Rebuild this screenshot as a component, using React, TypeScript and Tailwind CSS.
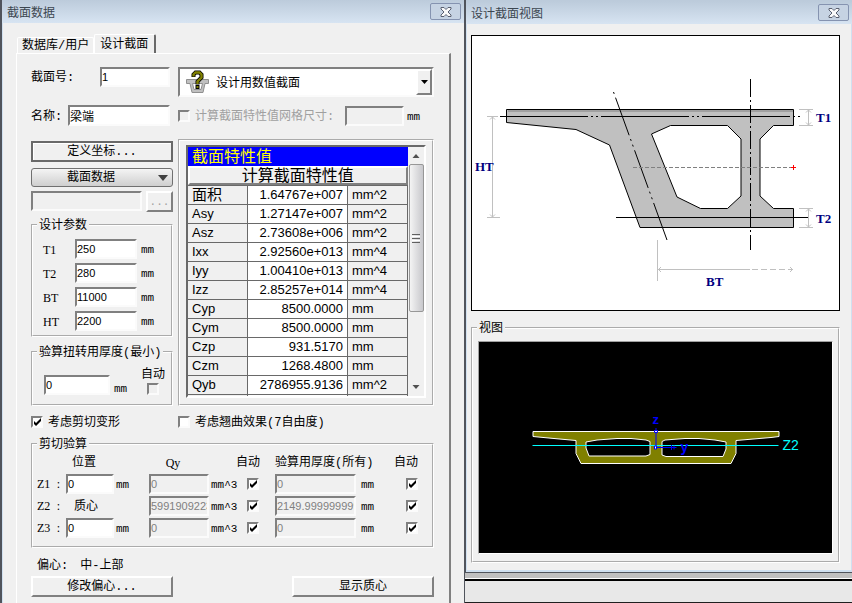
import React, { useState } from 'react';
import { clsx } from 'clsx';

const UI_FONT = "font-['Liberation_Mono','Noto_Sans_CJK_SC',monospace]";
const SUNKEN = 'border-2 border-t-[#808080] border-l-[#808080] border-b-[#fbfbfb] border-r-[#fbfbfb]';
const RAISED = 'border-2 border-t-white border-l-white border-b-[#808080] border-r-[#808080]';

const PROPERTIES = [
  { name: '面积', value: '1.64767e+007', unit: 'mm^2' },
  { name: 'Asy', value: '1.27147e+007', unit: 'mm^2' },
  { name: 'Asz', value: '2.73608e+006', unit: 'mm^2' },
  { name: 'Ixx', value: '2.92560e+013', unit: 'mm^4' },
  { name: 'Iyy', value: '1.00410e+013', unit: 'mm^4' },
  { name: 'Izz', value: '2.85257e+014', unit: 'mm^4' },
  { name: 'Cyp', value: '8500.0000', unit: 'mm' },
  { name: 'Cym', value: '8500.0000', unit: 'mm' },
  { name: 'Czp', value: '931.5170', unit: 'mm' },
  { name: 'Czm', value: '1268.4800', unit: 'mm' },
  { name: 'Qyb', value: '2786955.9136', unit: 'mm^2' },
];

const PARAMS = [
  { id: 'T1', value: '250' },
  { id: 'T2', value: '280' },
  { id: 'BT', value: '11000' },
  { id: 'HT', value: '2200' },
];

const SHEAR_ROWS = [
  { id: 'Z1', position: '0', qy: '0', thickness: '0' },
  { id: 'Z2', position: null, qy: '59919092235', thickness: '2149.9999999999' },
  { id: 'Z3', position: '0', qy: '0', thickness: '0' },
];

function Field({ className, ...props }: React.InputHTMLAttributes<HTMLInputElement>) {
  return (
    <input
      type="text"
      className={clsx(
        SUNKEN,
        "h-5 min-w-0 rounded-none bg-white pb-px font-['Liberation_Sans','Noto_Sans_CJK_SC',sans-serif] leading-4 text-black outline-none",
        'disabled:bg-[#f0f0f0] disabled:text-[#808080]',
        className ?? '',
        !className?.includes('text-xs') && 'text-[11px]'
      )}
      {...props}
    />
  );
}

function CheckBox({ className, ...props }: React.InputHTMLAttributes<HTMLInputElement>) {
  return (
    <span className={clsx('relative block size-3 shrink-0', className)}>
      <input
        type="checkbox"
        className={clsx(SUNKEN, 'peer block size-3 appearance-none bg-white disabled:bg-[#f0f0f0]')}
        {...props}
      />
      <svg viewBox="0 0 12 12" className="pointer-events-none absolute inset-0 hidden size-3 peer-checked:block">
        <path d="M3 5v3l2 2 5-5V2L5 7z" fill="#000" />
      </svg>
    </span>
  );
}

function Unit({ children, className }: { children: React.ReactNode; className?: string }) {
  return (
    <span className={clsx('pt-0.5 text-[11px] leading-3', className)}>{children}</span>
  );
}

function TitleBar({ title }: { title: string }) {
  return (
    <header className="flex h-[23px] items-center justify-between bg-linear-to-b from-[#bccbdb] to-[#d7e4f2] pr-[3px] pl-[5px]">
      <h1 className="font-['Noto_Sans_CJK_SC',sans-serif] text-xs leading-4 text-[#3c4650]">{title}</h1>
      <button
        type="button"
        aria-label="关闭"
        className="flex h-[17px] w-[31px] items-center justify-center rounded-[2px] border border-[#8593b0] bg-[#c6d3e3]"
      >
        <svg viewBox="0 0 12 10" className="h-2.5 w-3">
          <path
            d="M1 .5h3l2 2 2-2h3v1.500L8 5l3 3v1.500H8l-2-2-2 2H1V8l3-3-3-3z"
            fill="#fafafa"
            stroke="#5a6070"
            strokeWidth="1"
          />
        </svg>
      </button>
    </header>
  );
}

function Group({ title, className, children }: { title: string; className?: string; children: React.ReactNode }) {
  return (
    <fieldset className={clsx('min-w-0 border-2 border-white [border-style:groove]', className)}>
      <legend className="ml-1 px-0.5 pt-[3px] text-xs leading-[11px]">{title}</legend>
      {children}
    </fieldset>
  );
}

// trough-shaped girder with a question mark over it
function SectionIcon() {
  return (
    <svg viewBox="0 0 24 24" className="size-6 shrink-0">
      <path d="M.5 9.500h22v4h-3.500l-2 9h-11l-2-9H.5z" fill="#c0c0c0" stroke="#909090" />
      <path d="M6.500 13.500h10l-1.500 6H8z" fill="#fff" stroke="#909090" />
      <path d="M7.500 7V4.500L9.500 2.500h4l2 2v3l-4 4v3" fill="none" stroke="#000" strokeWidth="4" />
      <path d="M7.500 6.500v-2l2-2h4l2 2v3l-4 4v2.500" fill="none" stroke="#808000" strokeWidth="2.400" />
      <path d="M9.500 15h4v4h-4z" fill="#000" />
      <path d="M10.500 16h2v2h-2z" fill="#808000" />
    </svg>
  );
}

function PropertyGrid() {
  return (
    <div className="h-[267px] border-2 border-white px-1.5 pt-1 [border-style:groove]">
      <div className="flex h-[253px] border-2 border-t-[#696969] border-r-white border-b-white border-l-[#696969]">
        <div className="min-w-0 flex-1 overflow-hidden">
          <table className="w-full table-fixed border-collapse font-['Liberation_Sans','Noto_Sans_CJK_SC',sans-serif] text-[13px] leading-4">
            <colgroup>
              <col className="w-[59px]" />
              <col />
              <col className="w-[60px]" />
            </colgroup>
            <thead>
              <tr className="h-[19px]">
                <th colSpan={3} className="bg-[#0000ff] p-0 pl-1 text-left text-base leading-4 font-normal text-[#ffff00]">
                  截面特性值
                </th>
              </tr>
              <tr className="h-[19px]">
                <th colSpan={3} className="p-0 font-normal">
                  <button type="button" className={clsx(RAISED, 'block h-[19px] w-full text-base leading-[15px]')}>
                    计算截面特性值
                  </button>
                </th>
              </tr>
            </thead>
            <tbody>
              {PROPERTIES.map((p) => (
                <tr key={p.name} className="h-[19px]">
                  <td className="border border-l-0 border-[#696969] p-0 pl-1">
                    <span className={clsx('block', p.name === '面积' && 'text-[15px]')}>{p.name}</span>
                  </td>
                  <td className="border border-[#696969] bg-white p-0 pr-1 text-right">{p.value}</td>
                  <td className="border border-[#696969] p-0 pl-1">{p.unit}</td>
                </tr>
              ))}
              <tr className="h-[19px]">
                <td className="border border-l-0 border-[#696969]" />
                <td className="border border-[#696969] bg-white" />
                <td className="border border-[#696969]" />
              </tr>
            </tbody>
          </table>
        </div>
        <div className="flex w-4 flex-col items-center bg-[#f0f0f0]">
          <svg viewBox="0 0 16 17" className="h-[17px] w-4">
            <path d="M4.500 11 8 7l3.500 4z" fill="#505050" />
          </svg>
          <div className="flex h-[148px] w-[15px] items-center justify-center rounded-[2px] border border-[#979797] bg-linear-to-r from-[#f4f4f4] to-[#c8c8cc]">
            <div className="flex w-2 flex-col gap-px">
              <span className="h-px bg-[#606060]" />
              <span className="h-px bg-white" />
              <span className="h-px bg-[#606060]" />
              <span className="h-px bg-white" />
              <span className="h-px bg-[#606060]" />
            </div>
          </div>
          <svg viewBox="0 0 16 17" className="mt-auto h-[17px] w-4">
            <path d="M4.500 6 8 10l3.500-4z" fill="#505050" />
          </svg>
        </div>
      </div>
    </div>
  );
}

function SectionDialog() {
  const [shear, setShear] = useState(true);
  const [warping, setWarping] = useState(false);

  return (
    <section className="flex min-h-screen flex-col border-r border-l-2 border-r-[#50545c] border-l-[#50545c] bg-[#f0f0f0]">
      <TitleBar title="截面数据" />
      <div className="flex flex-1 flex-col border-l border-[#d0e0f0] pr-[13px] pl-[13px]">
        <div role="tablist" className="mt-[11px] flex items-end text-xs">
          <button
            type="button"
            role="tab"
            aria-selected="false"
            className="ml-px h-4 rounded-t-[2px] border border-b-0 border-white px-1 leading-4"
          >
            数据库/用户
          </button>
          <button
            type="button"
            role="tab"
            aria-selected="true"
            className="h-[19px] rounded-t-[2px] border border-r-2 border-b-0 border-white border-r-[#696969] pt-0.5 pr-1.5 pl-[5px] leading-4"
          >
            设计截面
          </button>
        </div>
        <div className="flex-1 border-t border-r-2 border-l border-t-white border-r-[#808080] border-l-white pt-[13px] pr-[15px] pl-3.5">
          <div className="flex gap-[5px]">
            <div className="w-[142px] shrink-0">
              <div className="flex items-center pr-[3px]">
                <label htmlFor="no" className="w-[69px] pt-0.5 text-xs">截面号:</label>
                <Field id="no" defaultValue="1" className="flex-1" />
              </div>
              <div className="mt-[18px] flex items-center pr-[3px]">
                <label htmlFor="name" className="w-[37px] pt-0.5 text-xs">名称:</label>
                <Field id="name" defaultValue="梁端" className="h-[21px] flex-1 text-xs" />
              </div>
              <button
                type="button"
                className="mt-[15px] block h-[21px] w-full border-2 border-t-[#696969] border-r-[#696969] border-b-[#696969] border-l-[#696969] pt-px text-xs leading-4 shadow-[inset_1px_1px_0_#fff]"
              >
                定义坐标...
              </button>
              <button
                type="button"
                className="mt-1.5 flex h-[19px] w-full items-center rounded-[3px] border border-[#707070] bg-linear-to-b from-[#f4f4f4] to-[#cfcfcf] pr-1 text-xs leading-4"
              >
                <span className="flex-1 pt-px pr-2">截面数据</span>
                <svg viewBox="0 0 10 6" className="h-1.5 w-2.5">
                  <path d="M0 0h10L5 6z" fill="#404040" />
                </svg>
              </button>
              <div className="mt-1 flex gap-1">
                <Field disabled aria-label="截面数据" className="flex-1" />
                <button type="button" disabled className={clsx(RAISED, 'h-[21px] w-[27px] text-[11px] leading-4 text-[#a0a0a0]')}>
                  ...
                </button>
              </div>
              <Group title="设计参数" className="mt-1.5 pt-[7px] pb-1">
                <div className="flex flex-col gap-1">
                  {PARAMS.map((p) => (
                    <div key={p.id} className="flex items-center pl-2.5">
                      <label htmlFor={p.id} className="w-8 pt-px font-['Liberation_Serif',serif] text-xs">{p.id}</label>
                      <Field id={p.id} defaultValue={p.value} className="w-[62px]" />
                      <Unit className="ml-1">mm</Unit>
                    </div>
                  ))}
                </div>
              </Group>
              <Group title="验算扭转用厚度(最小)" className="mt-2 h-[61px]">
                <div className="flex items-end pt-2 pr-1.5 pl-[11px]">
                  <Field aria-label="验算扭转用厚度" defaultValue="0" className="w-[66px]" />
                  <Unit className="ml-1">mm</Unit>
                  <label className="ml-auto flex flex-col items-center text-xs leading-4">
                    自动
                    <CheckBox disabled />
                  </label>
                </div>
              </Group>
            </div>
            <div className="min-w-0 flex-1">
              <div className={clsx(SUNKEN, 'relative flex h-[30px] items-center bg-white pl-1.5')}>
                <SectionIcon />
                <select
                  aria-label="截面类型"
                  className="h-full flex-1 appearance-none pt-1 pl-1.5 text-xs outline-none"
                  defaultValue="value"
                >
                  <option value="value">设计用数值截面</option>
                </select>
                <span className={clsx(RAISED, 'pointer-events-none flex h-full w-4 items-center justify-center bg-[#f0f0f0]')}>
                  <svg viewBox="0 0 7 4" className="h-1 w-[7px]">
                    <path d="M0 0h7L3.500 4z" fill="#000" />
                  </svg>
                </span>
              </div>
              <div className="mt-2 flex h-[21px] items-center">
                <label className="flex items-center gap-[5px] text-xs text-[#a0a0a0]">
                  <CheckBox disabled />
                  <span className="pt-0.5">计算截面特性值网格尺寸:</span>
                </label>
                <Field disabled aria-label="网格尺寸" className="ml-auto w-[59px]" />
                <Unit className="ml-[3px] w-[27px]">mm</Unit>
              </div>
              <div className="mt-[13px]">
                <PropertyGrid />
              </div>
            </div>
          </div>

          <div className="mt-[7px] flex text-xs">
            <label className="flex w-[147px] items-center gap-[5px]">
              <CheckBox checked={shear} onChange={(e) => setShear(e.target.checked)} />
              <span className="pt-0.5">考虑剪切变形</span>
            </label>
            <label className="flex items-center gap-[5px]">
              <CheckBox checked={warping} onChange={(e) => setWarping(e.target.checked)} />
              <span className="pt-0.5">考虑翘曲效果(7自由度)</span>
            </label>
          </div>

          <Group title="剪切验算" className="mt-1.5 pb-2">
            <div className="grid grid-cols-[29px_48px_35px_60px_27px_23px_16px_81px_38px_24px] items-center gap-y-0.5 px-1 text-xs whitespace-nowrap">
              <span />
              <span className="pt-[3px] pl-1.5 leading-[18px]">位置</span>
              <span />
              <span className="pt-0.5 pr-3 text-center font-['Liberation_Serif',serif]">Qy</span>
              <span />
              <span className="pt-[3px]">自动</span>
              <span />
              <span className="col-span-2 pt-[3px]">验算用厚度(所有)</span>
              <span className="pt-[3px]">自动</span>
              {SHEAR_ROWS.map((r) => (
                <React.Fragment key={r.id}>
                  <span className="flex justify-between pr-1.5 font-['Liberation_Serif',serif]">
                    {r.id} <span>:</span>
                  </span>
                  {r.position === null ? (
                    <span className="pt-0.5 pl-2">质心</span>
                  ) : (
                    <Field aria-label={r.id + ' 位置'} defaultValue={r.position} className="w-full" />
                  )}
                  <Unit className="pl-0.5">{r.position === null ? '' : 'mm'}</Unit>
                  <Field disabled aria-label={r.id + ' Qy'} value={r.qy} className="w-full" />
                  <Unit className="pl-0.5">mm^3</Unit>
                  <CheckBox defaultChecked aria-label={r.id + ' Qy 自动'} className="justify-self-end" />
                  <span />
                  <Field disabled aria-label={r.id + ' 厚度'} value={r.thickness} className="w-full" />
                  <Unit className="pl-[5px]">mm</Unit>
                  <CheckBox defaultChecked aria-label={r.id + ' 厚度 自动'} className="justify-self-end" />
                </React.Fragment>
              ))}
            </div>
          </Group>

          <p className="mt-2.5 flex gap-3 pl-1.5 text-xs">
            <span>偏心:</span>
            <span>中-上部</span>
          </p>
          <div className="mt-0.5 flex justify-between">
            <button type="button" className={clsx(RAISED, 'h-[21px] w-[142px] pt-px text-xs leading-4')}>
              修改偏心...
            </button>
            <button type="button" className={clsx(RAISED, 'h-[21px] w-[142px] pt-px text-xs leading-4')}>
              显示质心
            </button>
          </div>
        </div>
      </div>
    </section>
  );
}

function DesignDrawing() {
  return (
    <svg viewBox="472 36 367 274" className="block h-[274px] w-full">
      <path
        fillRule="evenodd"
        d="M506.500 109.500h287v16h-20l-13.500 13.500v57l13.500 12.500h20v19H640L609.500 145 576 129.500 506.500 122.500zM651.500 134l19-8.500h57l13.500 13.500v57l-13.500 12.500h-27L677 197z"
        fill="#c0c0c0"
        stroke="#000"
      />
      <path d="M508 111h285" stroke="#808080" fill="none" />
      <g fill="none" stroke="#000">
        <path d="M500 116.500h302" strokeDasharray="88 3 2 3 2 3" />
        <path d="M616 217.500h192" />
        <path d="M750.500 79v171" strokeDasharray="18 3 2 3" />
        <path d="M613.500 92 667 240" strokeDasharray="2 4 40 4 2 4" />
      </g>
      <path d="M633 167.500h158" stroke="#808080" strokeDasharray="4 2" />
      <path d="M791 167.500h5M793.500 165v5" stroke="#ff0000" />
      <g fill="none" stroke="#c0c0c0">
        <path d="M487 116.500h11M487 217.500h13M492.500 117v100M490 119.500l2.500-2.500 2.500 2.500M490 214.500l2.500 2.500 2.500-2.500" />
        <path d="M799 109.500h14M799 125.500h14M808.500 110v15M806 112.500l2.500-2.500 2.500 2.500M806 122.500l2.500 2.500 2.500-2.500" />
        <path d="M799 208.500h14M799 227.500h14M808.500 209v18M806 211.500l2.500-2.500 2.500 2.500M806 224.500l2.500 2.500 2.500-2.500" />
        <path d="M657.500 240v41M658 269.500h92M661 267l-2.500 2.500 2.500 2.500M790 267l2.500 2.500-2.500 2.500" />
        <path d="M752 269.500h41" strokeDasharray="6 3" />
      </g>
      <g fill="#000080" className="font-['Liberation_Serif',serif] text-[13px] font-bold">
        <text x="816" y="122">T1</text>
        <text x="816" y="223">T2</text>
        <text x="475" y="171">HT</text>
        <text x="706" y="286">BT</text>
      </g>
    </svg>
  );
}

function ModelView() {
  return (
    <svg viewBox="479 342 352 211" className="block h-[211px] w-full bg-black">
      <path d="M532.500 431.500h246v5l-8 1-35 3v13l-5 10h-150l-5-10v-13l-22-2-21-2z" fill="#808000" stroke="#fff" />
      <path
        d="M585.500 442l11-2 20-1.500h14l15 1.500 4 1.500v13l-4 1.500h-57l-3-8zM661.500 441.500l3-1.500 20-1.500h14l16 1.500 11 2v7l-3 7.500h-57l-4-1.500z"
        fill="#000"
        stroke="#fff"
      />
      <path d="M532 445.500h246" stroke="#00ffff" />
      <g fill="none" stroke="#0000ff">
        <path d="M655.500 447v-19M655 447.500h21M671 445v5M673.500 445.500v4" />
        <path d="M654 430.500h3v2h-3zM654 446h2v3h-2z" fill="#fff" />
      </g>
      <g className="font-['Liberation_Sans',sans-serif]">
        <text x="652" y="424" fill="#0000ff" fontSize="13" fontWeight="bold">z</text>
        <text x="680" y="452" fill="#0000ff" fontSize="14" fontWeight="bold">y</text>
        <text x="782" y="450" fill="#00ffff" fontSize="14">Z2</text>
      </g>
    </svg>
  );
}

function DesignViewDialog() {
  return (
    <section className="flex min-w-0 flex-col bg-[#e8e8e8]">
      <div className="flex flex-1 flex-col border-b border-l border-[#50545c] bg-[#f0f0f0]">
        <div className="h-px bg-[#bccbdb]" />
        <TitleBar title="设计截面视图" />
        <div className="flex-1 border-x border-b-2 border-[#d0e0f0] pt-[11px] pr-[11px] pl-1">
          <div className="border border-black bg-white">
            <DesignDrawing />
          </div>
          <Group title="视图" className="mt-2.5 pt-[6px] pb-[7px]">
            <div className="mx-[5px] border border-t-[#a0a0a0] border-r-white border-b-white border-l-[#a0a0a0]">
              <ModelView />
            </div>
          </Group>
        </div>
      </div>
      <div className="h-[5px] bg-[#c0c0c0]" />
      <div className="h-px bg-white" />
      <div className="h-0.5 bg-black" />
      <div className="h-[22px] border-b border-[#202020]" />
    </section>
  );
}

export default function App() {
  return (
    <main className={clsx(UI_FONT, 'grid min-h-screen grid-cols-[465px_1fr] bg-[#f0f0f0] text-black')}>
      <SectionDialog />
      <DesignViewDialog />
    </main>
  );
}
